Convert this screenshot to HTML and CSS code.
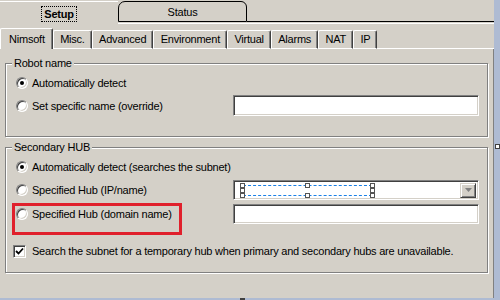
FILE: index.html
```html
<!DOCTYPE html>
<html lang="en">
<head>
  <meta charset="UTF-8">
  <title>Robot Setup</title>
  <link rel="stylesheet" href="styles.css">
</head>
<body>
<div class="window">
  <div class="main">
    <div class="top-tabs">
      <div class="top-tab active"><span class="focus">Setup</span></div>
      <div class="top-tab plain">Status</div>
      <div class="top-fill"></div>
    </div>
    <div class="top-line"></div>

    <div class="sub-tabs">
      <div class="sub-tab active">Nimsoft</div>
      <div class="sub-tab">Misc.</div>
      <div class="sub-tab">Advanced</div>
      <div class="sub-tab">Environment</div>
      <div class="sub-tab">Virtual</div>
      <div class="sub-tab">Alarms</div>
      <div class="sub-tab">NAT</div>
      <div class="sub-tab">IP</div>
      <div class="sub-fill"></div>
    </div>

    <div class="panel">
      <fieldset class="group group-robot">
        <legend>Robot name</legend>
        <div class="row r-first">
          <label class="opt"><span class="radio on"></span>Automatically detect</label>
        </div>
        <div class="row r-field">
          <label class="opt"><span class="radio"></span>Set specific name (override)</label>
          <span class="field"></span>
        </div>
      </fieldset>

      <fieldset class="group group-hub">
        <legend>Secondary HUB</legend>
        <div class="row r-first">
          <label class="opt"><span class="radio on"></span>Automatically detect (searches the subnet)</label>
        </div>
        <div class="row r-combo">
          <label class="opt"><span class="radio"></span>Specified Hub (IP/name)</label>
          <span class="field combo">
            <span class="sel">
              <i class="h h-tl"></i><i class="h h-tm"></i><i class="h h-tr"></i>
              <i class="h h-ml"></i><i class="h h-mr"></i>
              <i class="h h-bl"></i><i class="h h-bm"></i><i class="h h-br"></i>
            </span>
            <span class="drop">
              <svg width="7" height="4" viewBox="0 0 7 4"><path d="M0 0h7L3.5 4z" fill="#808080"/></svg>
            </span>
          </span>
        </div>
        <div class="row r-domain">
          <label class="opt"><span class="radio"></span>Specified Hub (domain name)</label>
          <span class="field"></span>
        </div>
        <div class="row r-check">
          <label class="opt wide">
            <span class="check">
              <svg width="9" height="9" viewBox="0 0 9 9"><path d="M1 4l2.5 2.5L8 1.5" fill="none" stroke="#000" stroke-width="1.8"/></svg>
            </span>
            Search the subnet for a temporary hub when primary and secondary hubs are unavailable.
          </label>
        </div>
      </fieldset>

      <div class="callout"></div>
    </div>
  </div>
  <div class="strip"><span class="handle"></span></div>
</div>
<div class="bottom-strip"><span class="mark"></span></div>
</body>
</html>
```

FILE: styles.css
```css
body {
  margin: 0;
  width: 500px;
  height: 300px;
  overflow: hidden;
  background-color: #d4d0c8;
  font-family: "Liberation Sans", Arial, sans-serif;
  font-size: 11px;
  letter-spacing: -0.22px;
  color: #000;
}
.window {
  display: flex;
  height: 298px;
}
.main {
  width: 494px;
  display: flex;
  flex-direction: column;
}
.strip {
  width: 6px;
  background-color: #aebbd3;
  position: relative;
}
.handle {
  position: absolute;
  left: 1px;
  top: 144px;
  width: 3px;
  height: 3px;
  background: #fff;
  border: 1px solid #404040;
}
.bottom-strip {
  height: 2px;
  background-color: #aebbd3;
  position: relative;
}
.mark {
  position: absolute;
  left: 240px;
  top: 0;
  width: 5px;
  height: 2px;
  background: #404040;
}

/* top tabs */
.top-tabs {
  display: flex;
  height: 22px;
}
.top-tab {
  box-sizing: border-box;
  margin-top: 1px;
  height: 21px;
  display: flex;
  justify-content: center;
  align-items: center;
}
.top-tab.active {
  width: 118px;
  border-top: 1px solid #fff;
  font-weight: bold;
  padding-top: 3px;
}
.focus {
  outline: 1px dotted #000;
  padding: 1px 2px;
  line-height: 12px;
}
.top-tab.plain {
  width: 129px;
  border: 1px solid #000;
  border-radius: 7px 6px 0 0;
  padding-top: 1px;
}
.top-fill {
  flex: 1;
  box-sizing: border-box;
  border-bottom: 1px solid #000;
}
.top-line {
  box-sizing: border-box;
  height: 2px;
  margin-left: 118px;
  border-bottom: 1px solid #fff;
}

/* inner tabs */
.sub-tabs {
  display: flex;
  align-items: flex-end;
  height: 21px;
  margin-top: 4px;
}
.sub-tab {
  box-sizing: border-box;
  height: 19px;
  padding: 2px 6px 0 6.4px;
  line-height: 13px;
  border-left: 1px solid #fff;
  border-top: 1px solid #fff;
  border-bottom: 1px solid #fff;
  border-right: 1px solid #404040;
  box-shadow: inset -1px 0 0 #808080;
  border-radius: 2px 2px 0 0;
}
.sub-tab.active {
  height: 21px;
  padding: 4px 7px 0 8px;
  border-bottom: none;
}
.sub-fill {
  flex: 1;
  box-sizing: border-box;
  height: 21px;
  border-bottom: 1px solid #fff;
}

/* panel */
.panel {
  flex: 1;
  position: relative;
  border-right: 1px solid #808080;
}
.group {
  margin: 8px 5px 0 5px;
  padding: 0 0 20px 0;
  border: 1px solid #808080;
  box-shadow: 1px 1px 0 #fff, inset 1px 1px 0 #fff;
  min-width: 0;
}
.group-hub {
  margin-top: 4px;
  padding-bottom: 14px;
}
legend {
  margin-left: 6px;
  padding: 0 2px;
  line-height: 12px;
  background-color: #d4d0c8;
}
.row {
  display: flex;
  align-items: center;
  padding-left: 10px;
}
.r-first {
  margin-top: 7px;
  height: 14px;
}
.r-field {
  margin-top: 5px;
  height: 21px;
}
.r-combo {
  margin-top: 6px;
  height: 20px;
}
.r-domain {
  margin-top: 4px;
  height: 20px;
}
.r-check {
  margin-top: 20px;
  height: 14px;
  padding-left: 7px;
}
.opt {
  display: flex;
  align-items: center;
  gap: 4px;
  width: 217px;
  white-space: nowrap;
}
.opt.wide {
  width: auto;
  gap: 6px;
}
.radio {
  flex: none;
  position: relative;
  box-sizing: border-box;
  width: 12px;
  height: 12px;
  border-radius: 50%;
  background: #fff;
  border: 1px solid;
  border-color: #808080 #fff #fff #808080;
  box-shadow: inset 1px 1px 0 #404040, inset -1px -1px 0 #d4d0c8;
}
.radio.on::after {
  content: "";
  position: absolute;
  left: 3px;
  top: 3px;
  width: 4px;
  height: 4px;
  border-radius: 50%;
  background: #000;
}
.check {
  flex: none;
  box-sizing: border-box;
  width: 13px;
  height: 13px;
  display: flex;
  align-items: center;
  justify-content: center;
  background: #fff;
  border: 1px solid;
  border-color: #808080 #fff #fff #808080;
  box-shadow: inset 1px 1px 0 #404040, inset -1px -1px 0 #d4d0c8;
}
.field {
  box-sizing: border-box;
  width: 246px;
  height: 100%;
  background: #fff;
  border: 1px solid;
  border-color: #808080 #fff #fff #808080;
  box-shadow: inset 1px 1px 0 #404040, inset -1px -1px 0 #d4d0c8;
}
.combo {
  position: relative;
  display: flex;
  justify-content: flex-end;
  align-items: center;
  padding: 2px;
}
.drop {
  box-sizing: border-box;
  width: 16px;
  height: 15px;
  display: flex;
  align-items: center;
  justify-content: center;
  background: #d4d0c8;
  border: 1px solid;
  border-color: #d4d0c8 #404040 #404040 #d4d0c8;
  box-shadow: inset 1px 1px 0 #fff, inset -1px -1px 0 #808080;
}

/* design-time selection frame */
.sel {
  position: absolute;
  left: 9px;
  top: 4px;
  width: 129px;
  height: 9px;
  border-top: 1px dashed #1a80e6;
  border-bottom: 1px dashed #1a80e6;
}
.h {
  position: absolute;
  width: 3px;
  height: 3px;
  background: #fff;
  border: 1px solid #555;
}
.h-tl, .h-tm, .h-tr { top: -3px; }
.h-ml, .h-mr { top: 2px; }
.h-bl, .h-bm, .h-br { top: 7px; }
.h-tl, .h-ml, .h-bl { left: -3px; }
.h-tm, .h-bm { left: 62px; }
.h-tr, .h-mr, .h-br { right: -3px; }

.callout {
  position: absolute;
  left: 12px;
  top: 154px;
  box-sizing: border-box;
  width: 170px;
  height: 32px;
  border: 3px solid #e0202c;
}
```
